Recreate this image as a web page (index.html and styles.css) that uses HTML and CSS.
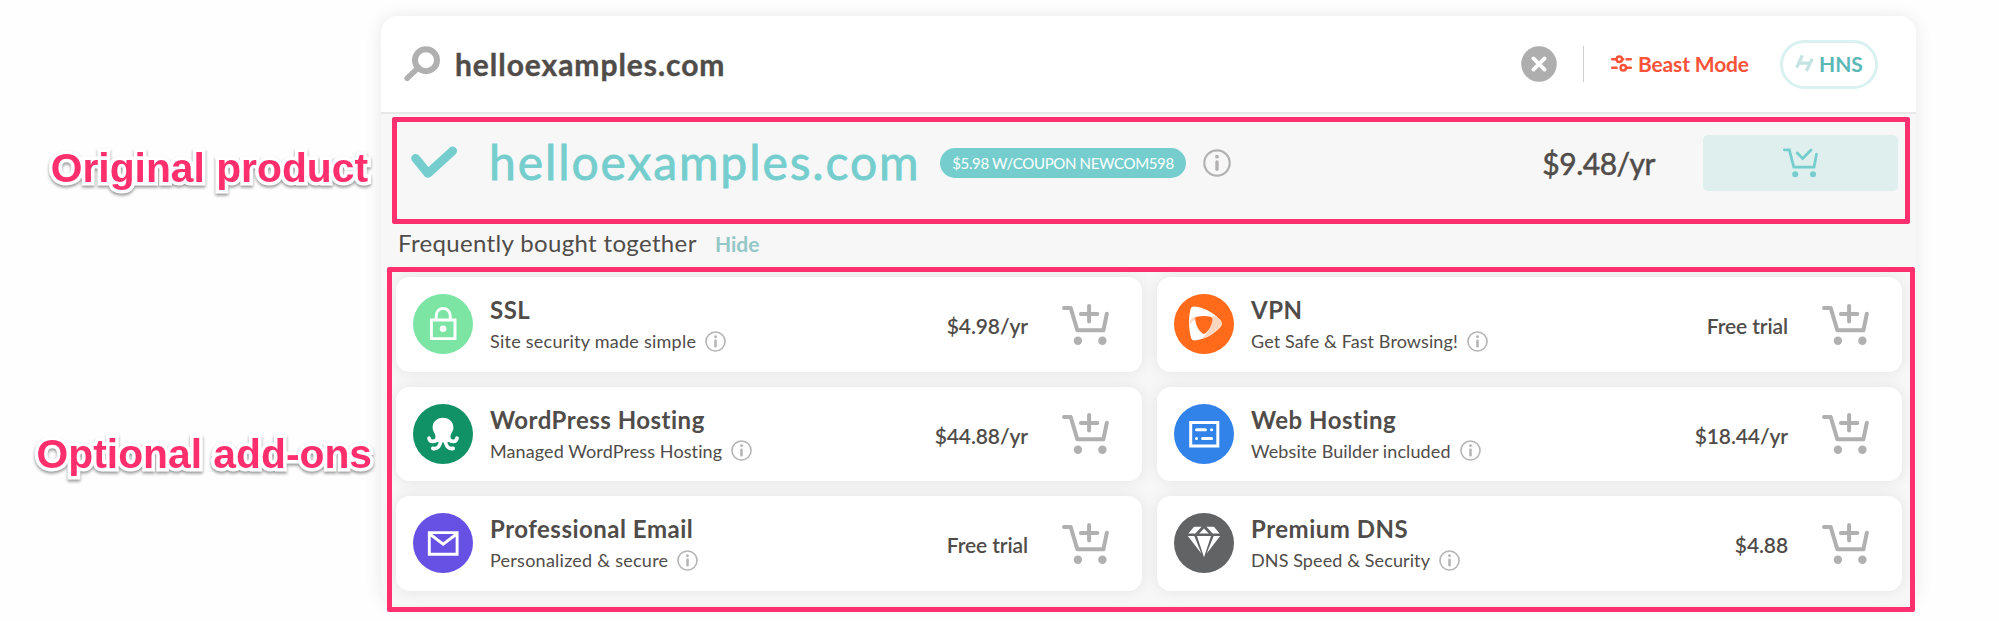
FILE: index.html
```html
<!DOCTYPE html>
<html lang="en">
<head>
    <meta charset="UTF-8">
    <meta name="viewport" content="width=device-width, initial-scale=1.0">
    <title>helloexamples.com</title>
    <link rel="stylesheet" href="styles.css">
</head>
<body>
    <!-- Shared icons -->
    <svg class="sprite" width="0" height="0">
        <symbol id="info" viewBox="0 0 28 28">
            <circle cx="14" cy="14" r="12.7" fill="none" stroke="currentColor" stroke-width="2.2"/>
            <circle cx="14" cy="7.7" r="1.9" fill="currentColor"/>
            <path d="M14 13v7.2" stroke="currentColor" stroke-width="3.4" stroke-linecap="round"/>
        </symbol>
        <symbol id="cart-add" viewBox="0 0 47 41">
            <path d="M2 4H8.7L15.3 26.3H41.4L44.8 9.8M18.9 10H35.3M27.1 2V17.6" fill="none" stroke="currentColor" stroke-width="4" stroke-linecap="round" stroke-linejoin="round"/>
            <circle cx="15.9" cy="36.7" r="4.2" fill="currentColor"/>
            <circle cx="40.4" cy="36.7" r="4.2" fill="currentColor"/>
        </symbol>
    </svg>

    <div class="page">
        <div class="notes">
            <div class="note note-original">Original product</div>
            <div class="note note-addons">Optional add-ons</div>
        </div>

        <div class="panel">
            <div class="search">
                <svg class="search-icon" width="36" height="36" viewBox="0 0 36 36">
                    <path d="M14.5 21.5L3.2 32.2" stroke="#b0b0b0" stroke-width="5.6" stroke-linecap="round"/>
                    <circle cx="22" cy="14.2" r="11" fill="none" stroke="#b0b0b0" stroke-width="6"/>
                </svg>
                <span class="search-text">helloexamples.com</span>
                <svg class="clear" width="36" height="36" viewBox="0 0 36 36">
                    <circle cx="18" cy="18" r="17.8" fill="#aeaeae"/>
                    <path d="M12.4 12.4L23.6 23.6M23.6 12.4L12.4 23.6" stroke="#fff" stroke-width="3.8" stroke-linecap="round"/>
                </svg>
                <span class="divider"></span>
                <span class="beast">
                    <svg width="21" height="17" viewBox="0 0 21 17" fill="none" stroke="#f9533a" stroke-width="2.5" stroke-linecap="round">
                        <path d="M1.2 4.2H5M11.4 4.2H12.2M15.6 4.2H19.8M1.2 12.8H5.6M15.4 12.8H19.8"/>
                        <circle cx="8.3" cy="4.2" r="2.7"/>
                        <circle cx="12.3" cy="12.8" r="2.7"/>
                    </svg>
                    <span>Beast Mode</span>
                </span>
                <span class="hns">
                    <svg width="19" height="18" viewBox="0 0 19 18">
                        <path d="M7.4 1.4L1.6 13.6M17.2 4.8L11.4 17M4.6 9.2H14.4" stroke="#c5e3e1" stroke-width="3.3"/>
                    </svg>
                    <span>HNS</span>
                </span>
            </div>

            <div class="product">
                <svg class="check" width="47" height="34" viewBox="0 0 47 34">
                    <path d="M4.6 12.3L16.9 27.4L41.6 4.9" fill="none" stroke="#75cecd" stroke-width="8.8" stroke-linecap="round" stroke-linejoin="round"/>
                </svg>
                <span class="product-name">helloexamples.com</span>
                <span class="coupon">$5.98 W/COUPON NEWCOM598</span>
                <svg class="product-info" width="28" height="28"><use href="#info"/></svg>
                <span class="product-price">$9.48/yr</span>
                <span class="product-button">
                    <svg width="35" height="30" viewBox="0 0 35 30">
                        <path d="M1.3 1.8H6.3L10.8 19.2H31L33.5 6.2M14.3 5L19.7 10.4L28 2" fill="none" stroke="#75cecd" stroke-width="2.8" stroke-linecap="round"/>
                        <circle cx="12.2" cy="26.2" r="3" fill="#75cecd"/>
                        <circle cx="30" cy="26.2" r="3" fill="#75cecd"/>
                    </svg>
                </span>
            </div>

            <div class="bundle-head">
                <span class="bundle-title">Frequently bought together</span>
                <span class="hide">Hide</span>
            </div>

            <div class="addons">
                <div class="card">
                    <svg class="logo" viewBox="0 0 60 60">
                        <circle cx="30" cy="30" r="30" fill="#7ce5a4"/>
                        <path d="M18.4 26H42V44.6H18.4ZM23.2 25.5V21.4a7 7 0 0 1 14 0V25.5" fill="none" stroke="#fff" stroke-width="2.9"/>
                        <circle cx="30.1" cy="34.8" r="3.3" fill="#fff"/>
                    </svg>
                    <div class="info">
                        <div class="title">SSL</div>
                        <div class="desc wide">Site security made simple<svg class="tip"><use href="#info"/></svg></div>
                    </div>
                    <div class="price">$4.98/yr</div>
                    <svg class="cart"><use href="#cart-add"/></svg>
                </div>

                <div class="card">
                    <svg class="logo" viewBox="0 0 60 60">
                        <circle cx="30" cy="30" r="30" fill="#ff6b1a"/>
                        <path d="M19.5 12.6C28 12.6 39 18 46.5 26.2Q49 29.6 46.5 33C39 41 30 45.5 20.5 46.5Q17.6 46.5 17 43.5C14.6 34 14.4 24 16.4 15.5Q17.2 12.7 19.5 12.6Z" fill="#fff"/>
                        <path d="M38.5 21.8C42 22.3 44.5 24 46.5 26.2Q49 29.6 46.5 33C41 38.8 34.5 43 27.5 45C34.5 38.5 38.5 31 38.5 21.8Z" fill="#ffd6c0"/>
                        <path d="M15.4 32C15.4 26 17.6 23 22 22.4L21.4 25.4C19 26.4 16.6 28.6 15.4 32Z" fill="#ffd6c0"/>
                        <path d="M21.2 25.2C20.8 23.6 21.6 23 23 22.7C28 21.6 32 21.6 36.6 22.7Q38.9 23.2 38.6 25.4C37.7 31.2 35.4 36 31.6 39.2Q29.9 40.4 28.2 39.2C24 36 21.8 31 21.2 25.2Z" fill="#ff6b1a"/>
                    </svg>
                    <div class="info">
                        <div class="title">VPN</div>
                        <div class="desc">Get Safe &amp; Fast Browsing!<svg class="tip"><use href="#info"/></svg></div>
                    </div>
                    <div class="price">Free trial</div>
                    <svg class="cart"><use href="#cart-add"/></svg>
                </div>

                <div class="card">
                    <svg class="logo" viewBox="0 0 60 60">
                        <circle cx="30" cy="30" r="30" fill="#109166"/>
                        <path d="M30 13.8C36.5 13.8 40.4 18.2 40.4 23.6C40.4 28 37.6 29 37.6 32.5L37 38L30 38.6L23 38L22.4 32.5C22.4 29 19.6 28 19.6 23.6C19.6 18.2 23.5 13.8 30 13.8Z" fill="#fff"/>
                        <path d="M16 34C16.6 38.8 23 38.6 25 33.5M44 34C43.4 38.8 37 38.6 35 33.5M19.8 44.4C25 45.4 27.6 41.5 27.8 36M40.2 44.4C35 45.4 32.4 41.5 32.2 36" fill="none" stroke="#fff" stroke-width="3.7" stroke-linecap="round"/>
                    </svg>
                    <div class="info">
                        <div class="title">WordPress Hosting</div>
                        <div class="desc">Managed WordPress Hosting<svg class="tip"><use href="#info"/></svg></div>
                    </div>
                    <div class="price">$44.88/yr</div>
                    <svg class="cart"><use href="#cart-add"/></svg>
                </div>

                <div class="card">
                    <svg class="logo" viewBox="0 0 60 60">
                        <circle cx="30" cy="30" r="30" fill="#3182e9"/>
                        <path d="M16.7 18.5H43.8V41.9H16.7Z" fill="none" stroke="#fff" stroke-width="3"/>
                        <path d="M22.5 25.7H31.5M37.5 25.7H37.6M22.5 34.6H22.6M28.6 34.6H37.6" stroke="#fff" stroke-width="3" stroke-linecap="round"/>
                    </svg>
                    <div class="info">
                        <div class="title">Web Hosting</div>
                        <div class="desc">Website Builder included<svg class="tip"><use href="#info"/></svg></div>
                    </div>
                    <div class="price">$18.44/yr</div>
                    <svg class="cart"><use href="#cart-add"/></svg>
                </div>

                <div class="card">
                    <svg class="logo" viewBox="0 0 60 60">
                        <circle cx="30" cy="30" r="30" fill="#6751e4"/>
                        <path d="M16.3 19.6H44.1V41.2H16.3ZM16.8 21L30.2 31.2L43.6 21" fill="none" stroke="#fff" stroke-width="2.9"/>
                    </svg>
                    <div class="info">
                        <div class="title">Professional Email</div>
                        <div class="desc wide">Personalized &amp; secure<svg class="tip"><use href="#info"/></svg></div>
                    </div>
                    <div class="price">Free trial</div>
                    <svg class="cart"><use href="#cart-add"/></svg>
                </div>

                <div class="card">
                    <svg class="logo" viewBox="0 0 60 60">
                        <circle cx="30" cy="30" r="30" fill="#626365"/>
                        <path d="M20 13.8H27.6L21.4 20.4H14.4ZM32.4 13.8H40L45.6 20.4H38.6ZM30 15.4L34.8 20.4H25.2ZM13.8 23H20.3L27.4 40.6ZM46.2 23H39.7L32.6 40.6ZM23 23H37L30 44.2Z" fill="#fff"/>
                    </svg>
                    <div class="info">
                        <div class="title">Premium DNS</div>
                        <div class="desc">DNS Speed &amp; Security<svg class="tip"><use href="#info"/></svg></div>
                    </div>
                    <div class="price">$4.88</div>
                    <svg class="cart"><use href="#cart-add"/></svg>
                </div>
            </div>
        </div>

        <!-- Highlight frames laid over the panel -->
        <div class="frame frame-original"></div>
        <div class="frame frame-addons"></div>
    </div>
</body>
</html>
```

FILE: styles.css
```css
* {
    box-sizing: border-box;
}

body {
    margin: 0;
    background: #fefefe;
    color: #504c49;
    font-family: Lato, 'Open Sans', sans-serif;
    font-variant-ligatures: none;
}

svg {
    display: block;
    flex-shrink: 0;
}

.sprite {
    position: absolute;
}

.page {
    position: relative;
    display: flex;
    width: 1999px;
    height: 621px;
    overflow: hidden;
    white-space: nowrap;
}

/* Notes on the left */
.notes {
    width: 381px;
    padding: 144px 9px 0 0;
    position: relative;
    z-index: 2;
}

.note {
    height: 48px;
    line-height: 48px;
    text-align: right;
    font-family: 'Liberation Sans', Arial, sans-serif;
    font-size: 40.8px;
    font-weight: bold;
    color: #ff2f6e;
    -webkit-text-stroke: 7px #fff;
    paint-order: stroke fill;
    filter: drop-shadow(0 2px 1.5px rgba(0, 0, 0, 0.4));
}

.note-original {
    padding-right: 4px;
}

.note-addons {
    margin-top: 238px;
}

/* Panel */
.panel {
    width: 1535px;
    height: 589px;
    margin-top: 16px;
    background: #f7f7f7;
    border-radius: 17px;
    box-shadow: 0 0 18px rgba(0, 0, 0, 0.09);
}

.search {
    display: flex;
    align-items: center;
    height: 98px;
    padding: 0 38px 0 23px;
    background: #fff;
    border-bottom: 2px solid #e8e8e8;
    border-radius: 17px 17px 0 0;
}

.search-text {
    margin-left: 15px;
    font-size: 30px;
    font-weight: bold;
    letter-spacing: 0.95px;
    -webkit-text-stroke: 0.4px currentColor;
}

.clear {
    margin-left: auto;
}

.divider {
    width: 1px;
    height: 36px;
    margin: 0 27px 0 26px;
    background: #d2d2d2;
}

.beast {
    display: flex;
    align-items: center;
    gap: 6px;
    width: 139px;
    padding-bottom: 1px;
    color: #f9533a;
    font-size: 21px;
    font-weight: bold;
    letter-spacing: -0.15px;
}

.hns {
    display: flex;
    align-items: center;
    gap: 5px;
    width: 98px;
    height: 49px;
    margin-left: 30px;
    padding: 0 0 2px 12px;
    border: 3px solid #d9f1f0;
    border-radius: 25px;
    color: #5ab8b7;
    font-size: 21px;
    font-weight: bold;
}

.product {
    display: flex;
    align-items: center;
    height: 98px;
    padding: 0 18px 0 30px;
}

.check {
    margin-right: 31px;
}

.product-name {
    width: 451px;
    padding-bottom: 2px;
    font-size: 48px;
    line-height: 60px;
    letter-spacing: 1.9px;
    color: #75cecd;
    -webkit-text-stroke: 0.8px currentColor;
}

.coupon {
    width: 246px;
    height: 30px;
    border-radius: 15px;
    background: #75cecd;
    color: #fff;
    font-size: 15px;
    line-height: 30px;
    letter-spacing: -0.35px;
    text-align: center;
}

.product-info {
    margin-left: 17px;
    color: #b3b1b1;
}

.product-price {
    margin-left: auto;
    font-size: 30px;
    letter-spacing: -0.5px;
    -webkit-text-stroke: 0.5px currentColor;
}

.product-button {
    display: flex;
    align-items: center;
    justify-content: center;
    width: 195px;
    height: 56px;
    margin-left: 48px;
    background: #deefee;
    border-radius: 5px;
}

.bundle-head {
    display: flex;
    align-items: baseline;
    height: 65px;
    padding: 15px 0 0 17px;
    line-height: 32px;
}

.bundle-title {
    width: 317px;
    font-size: 24px;
    letter-spacing: 0.35px;
}

.hide {
    color: #93c8c7;
    font-size: 21px;
    font-weight: bold;
}

/* Add-on cards */
.addons {
    display: grid;
    grid-template-columns: 746px 745px;
    grid-auto-rows: 94.5px;
    gap: 15px;
    padding-left: 15px;
}

.card {
    display: flex;
    align-items: center;
    padding: 0 33px 0 17px;
    background: #fff;
    border-radius: 14px;
    box-shadow: 0 0 15px rgba(0, 0, 0, 0.08);
}

.logo {
    width: 60px;
    height: 60px;
}

.info {
    margin-left: 17px;
    padding-top: 2px;
}

.title {
    font-size: 24px;
    font-weight: bold;
    line-height: 32px;
    letter-spacing: 0.5px;
}

.desc {
    display: flex;
    align-items: center;
    gap: 9px;
    font-size: 18px;
    line-height: 30px;
    letter-spacing: 0.1px;
}

.desc.wide {
    letter-spacing: 0.25px;
}

.tip {
    width: 21px;
    height: 21px;
    color: #b5b5b5;
}

.price {
    margin-left: auto;
    padding-top: 3px;
    font-size: 21px;
    font-weight: 600;
    letter-spacing: -0.1px;
}

.cart {
    width: 47px;
    height: 41px;
    margin-left: 34px;
    color: #b0b0b0;
}

/* Highlight frames */
.frame {
    position: absolute;
    border: 5px solid #ff3070;
    border-radius: 2px;
}

.frame-original {
    left: 392px;
    top: 117px;
    width: 1518px;
    height: 107px;
}

.frame-addons {
    left: 387px;
    top: 267px;
    width: 1528px;
    height: 345px;
}
```
